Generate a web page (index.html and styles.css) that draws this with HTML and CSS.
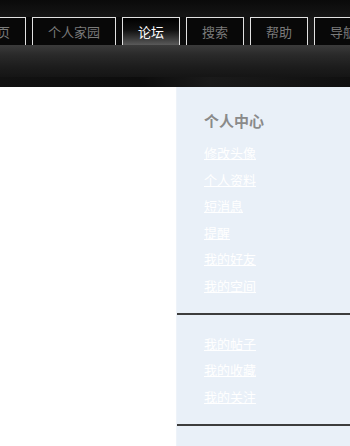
FILE: index.html
```html
<!DOCTYPE html>
<html lang="zh-CN">
<head>
<meta charset="utf-8">
<title>个人中心</title>
<link rel="stylesheet" href="styles.css">
</head>
<body>
<header class="header">
  <div class="header-top"></div>
  <nav class="nav">
    <a class="tab" href="#">首页</a>
    <a class="tab" href="#">个人家园</a>
    <a class="tab tab-active" href="#">论坛</a>
    <a class="tab" href="#">搜索</a>
    <a class="tab" href="#">帮助</a>
    <a class="tab" href="#">导航</a>
  </nav>
  <div class="subbar"></div>
  <div class="strip"></div>
</header>
<div class="page">
  <main class="content"></main>
  <aside class="sidebar">
    <section class="group group-first">
      <h2 class="group-title">个人中心</h2>
      <ul class="links">
        <li><a href="#">修改头像</a></li>
        <li><a href="#">个人资料</a></li>
        <li><a href="#">短消息</a></li>
        <li><a href="#">提醒</a></li>
        <li><a href="#">我的好友</a></li>
        <li><a href="#">我的空间</a></li>
      </ul>
    </section>
    <section class="group">
      <ul class="links">
        <li><a href="#">我的帖子</a></li>
        <li><a href="#">我的收藏</a></li>
        <li><a href="#">我的关注</a></li>
      </ul>
    </section>
  </aside>
</div>
</body>
</html>
```
FILE: styles.css
```css
html, body {
  margin: 0;
  padding: 0;
  height: 100%;
}
body {
  font-family: "Noto Sans CJK SC", "DejaVu Sans", sans-serif;
  background: #ffffff;
  overflow: hidden;
}
.header {
  background: linear-gradient(90deg, #050505 0%, #0c0c0c 50%, #1c1c1c 100%);
}
.header-top {
  height: 17px;
  background: linear-gradient(180deg, #0a0a0a 0%, #151515 100%);
}
.nav {
  display: flex;
  gap: 6px;
  height: 28px;
  margin-left: -32px;
  white-space: nowrap;
}
.tab {
  display: block;
  box-sizing: border-box;
  height: 28px;
  line-height: 27px;
  padding: 0 15px;
  border: 1px solid #e2e2e2;
  border-bottom: none;
  background: #080808;
  color: #7a7a7a;
  font-size: 13px;
  text-decoration: none;
  flex: none;
}
.tab-active {
  color: #ffffff;
  background: linear-gradient(180deg, #000000 0%, #111111 45%, #5a5a5a 100%);
}
.subbar {
  height: 32px;
  background: linear-gradient(180deg, #3b3b3b 0%, #2a2a2a 30%, #1c1c1c 70%, #151515 100%);
}
.strip {
  height: 10px;
  background: linear-gradient(90deg, #121212 0%, #0d0d0d 40%, #1a1a1a 60%, #101010 100%);
}
.page {
  display: grid;
  grid-template-columns: 176px 1fr;
  min-height: calc(100% - 87px);
}
.content {
  background: #ffffff;
}
.sidebar {
  background: #e9f0f8;
  border-left: 1px solid #eef3f9;
}
.group {
  padding: 16px 0 14px 27px;
  border-bottom: 2px solid #3d3d3d;
}
.group-first {
  padding-top: 24px;
  padding-bottom: 13px;
}
.group-title {
  margin: 0 0 9px;
  font-size: 15px;
  line-height: 20px;
  font-weight: bold;
  color: #8a8a8a;
}
.links {
  list-style: none;
  margin: 0;
  padding: 0;
}
.links li {
  line-height: 26.6px;
  font-size: 13px;
}
.links a {
  color: #ffffff;
  text-decoration: underline;
}
```
